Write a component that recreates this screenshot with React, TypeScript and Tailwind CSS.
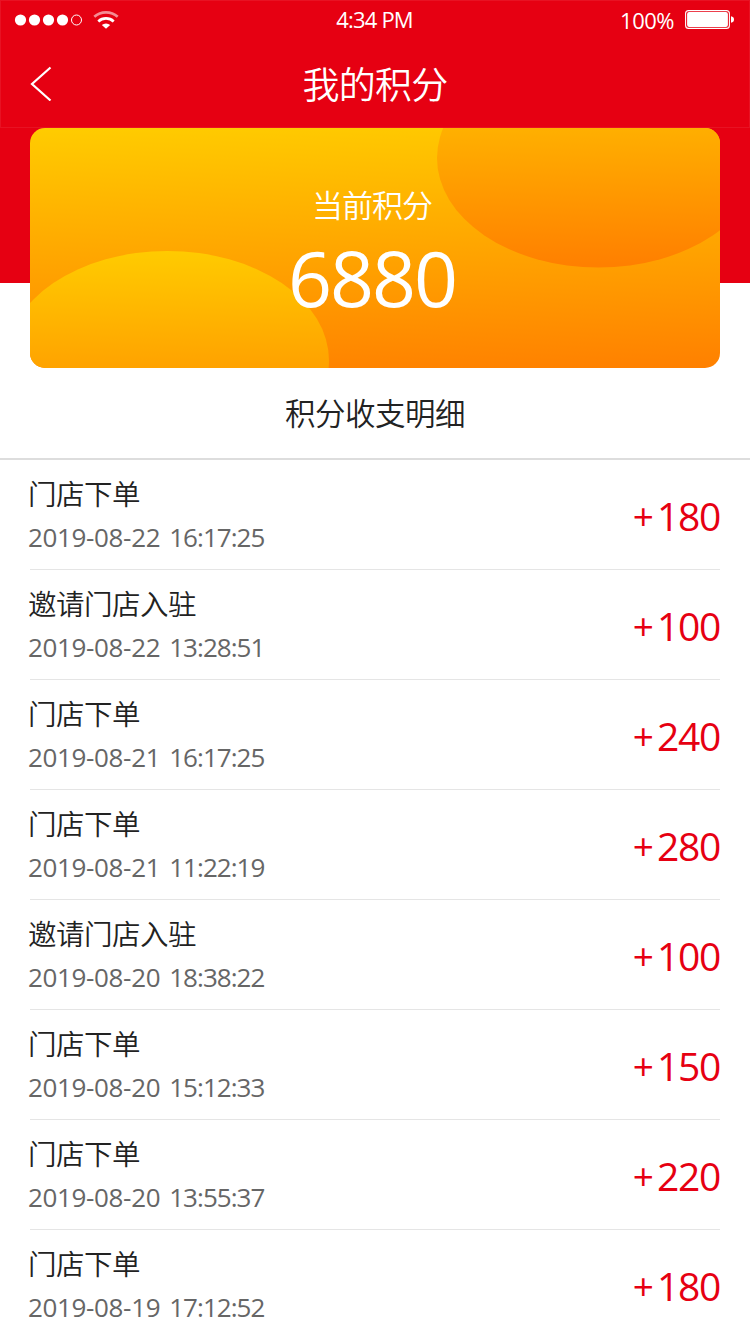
import React from "react"

interface PointRecord {
  title: string
  date: string
  time: string
  points: number
}

const records: PointRecord[] = [
  { title: "门店下单", date: "2019-08-22", time: "16:17:25", points: 180 },
  { title: "邀请门店入驻", date: "2019-08-22", time: "13:28:51", points: 100 },
  { title: "门店下单", date: "2019-08-21", time: "16:17:25", points: 240 },
  { title: "门店下单", date: "2019-08-21", time: "11:22:19", points: 280 },
  { title: "邀请门店入驻", date: "2019-08-20", time: "18:38:22", points: 100 },
  { title: "门店下单", date: "2019-08-20", time: "15:12:33", points: 150 },
  { title: "门店下单", date: "2019-08-20", time: "13:55:37", points: 220 },
  { title: "门店下单", date: "2019-08-19", time: "17:12:52", points: 180 },
]

function StatusBar() {
  return (
    <div className="grid h-[38px] grid-cols-3 items-center pl-[13px] pr-[14px] text-[22px] font-[390] leading-none">
      <div className="flex items-center">
        {/* Signal dots */}
        <svg width="70" height="12" viewBox="0 0 70 12" fill="white">
          <circle cx="6.5" cy="6" r="5.6" />
          <circle cx="20.5" cy="6" r="5.6" />
          <circle cx="34.5" cy="6" r="5.6" />
          <circle cx="48.5" cy="6" r="5.6" />
          <circle cx="62.5" cy="6" r="5" fill="none" stroke="white" />
        </svg>
        <svg className="ml-[9px] -mt-px" width="26" height="20" viewBox="0 0 26 20" fill="none">
          <path d="M1.3 6.8A17.5 17.5 0 0 1 24.7 6.8" stroke="white" strokeOpacity="0.55" strokeWidth="2.7" />
          <path d="M5.3 11.4A11.5 11.5 0 0 1 20.7 11.4" stroke="white" strokeWidth="2.7" />
          <path d="M8.8 15A6.3 6.3 0 0 1 17.2 15L13 18.8Z" fill="white" />
        </svg>
      </div>
      <span className="-mt-0.5 text-center tracking-[-0.8px]">4:34 PM</span>
      <div className="flex items-center justify-end">
        <span className="tracking-[-0.5px]">100%</span>
        <svg className="ml-[11px]" width="50" height="20" viewBox="0 0 50 20">
          <rect x="0.6" y="0.6" width="43.8" height="17.8" rx="3" fill="none" stroke="white" strokeWidth="1.1" />
          <rect x="2.1" y="2.1" width="40.8" height="14.8" rx="2" fill="white" />
          <path d="M46 6.2Q49 6.8 49 9.5T46 12.8Z" fill="white" />
        </svg>
      </div>
    </div>
  )
}

function Header() {
  return (
    <header className="h-32 border border-white/[0.07] bg-[#e60012] text-white">
      <StatusBar />
      <div className="grid h-[88px] grid-cols-[80px_1fr_80px] items-center">
        <button className="pl-[29px]" aria-label="返回">
          <svg width="22" height="36" viewBox="0 0 22 36" fill="none" stroke="white" strokeWidth="2.2">
            <path d="M20.5 2.5L2 19L20.5 35.5" />
          </svg>
        </button>
        <h1 className="pt-0.5 text-center text-[37px] font-[350] leading-none tracking-[-0.8px]">我的积分</h1>
      </div>
    </header>
  )
}

function BalanceCard() {
  return (
    <section className="bg-[linear-gradient(#e60012_155px,#fff_155px)] px-[30px]">
      <div className="relative h-60 overflow-hidden rounded-[15px] bg-[linear-gradient(178deg,#ffcc00,#ff8000)] text-white">
        <svg className="absolute inset-0" width="690" height="240" viewBox="0 0 690 240">
          <defs>
            <linearGradient id="bubble" x1="0" y1="0" x2="0.03" y2="1">
              <stop offset="0" stopColor="#ffcc00" />
              <stop offset="1" stopColor="#ff8000" />
            </linearGradient>
          </defs>
          <ellipse cx="568.5" cy="30" rx="161.5" ry="109.5" fill="url(#bubble)" />
          <ellipse cx="137.5" cy="232.5" rx="161.5" ry="109.5" fill="url(#bubble)" />
        </svg>
        <div className="relative flex flex-col items-center pt-[61px] pr-[6px]">
          <p className="text-[31px] font-[350] leading-[32px] tracking-[-1px]">当前积分</p>
          <p className="mt-[15px] text-[77px] leading-[84px] tracking-[-2px]">6880</p>
        </div>
      </div>
    </section>
  )
}

function RecordRow({ record }: { record: PointRecord }) {
  return (
    <li className="flex h-[110px] items-center justify-between border-b border-[#e5e5e5]">
      <div className="-ml-0.5 flex flex-col pt-0.5">
        <span className="text-[28.5px] font-[350] leading-[36px] tracking-[-0.5px] text-[#222]">{record.title}</span>
        <span className="mt-[7px] flex gap-[9px] text-[26px] font-[380] leading-[36px] text-[#666]">
          <span className="tracking-[-0.35px]">{record.date}</span>
          <span className="tracking-[-0.95px]">{record.time}</span>
        </span>
      </div>
      <span className="flex pt-0.5 text-[39px] leading-none text-[#e60012]">
        <span className="mr-[3px] pt-px text-[37px]">+</span>
        <span className="tracking-[-1.3px]">{record.points}</span>
      </span>
    </li>
  )
}

export default function App() {
  return (
    <div className="h-[1334px] w-[750px] overflow-hidden bg-white font-['Open_Sans','Noto_Sans_CJK_SC',sans-serif]">
      <Header />
      <BalanceCard />
      <h2 className="flex h-[92px] items-center justify-center border-b-2 border-[#ddd] text-[30.5px] font-[350] leading-none tracking-[-0.5px] text-[#222]">
        积分收支明细
      </h2>
      <ul className="px-[30px]">
        {records.map((record) => (
          <RecordRow key={record.date + record.time} record={record} />
        ))}
      </ul>
    </div>
  )
}
